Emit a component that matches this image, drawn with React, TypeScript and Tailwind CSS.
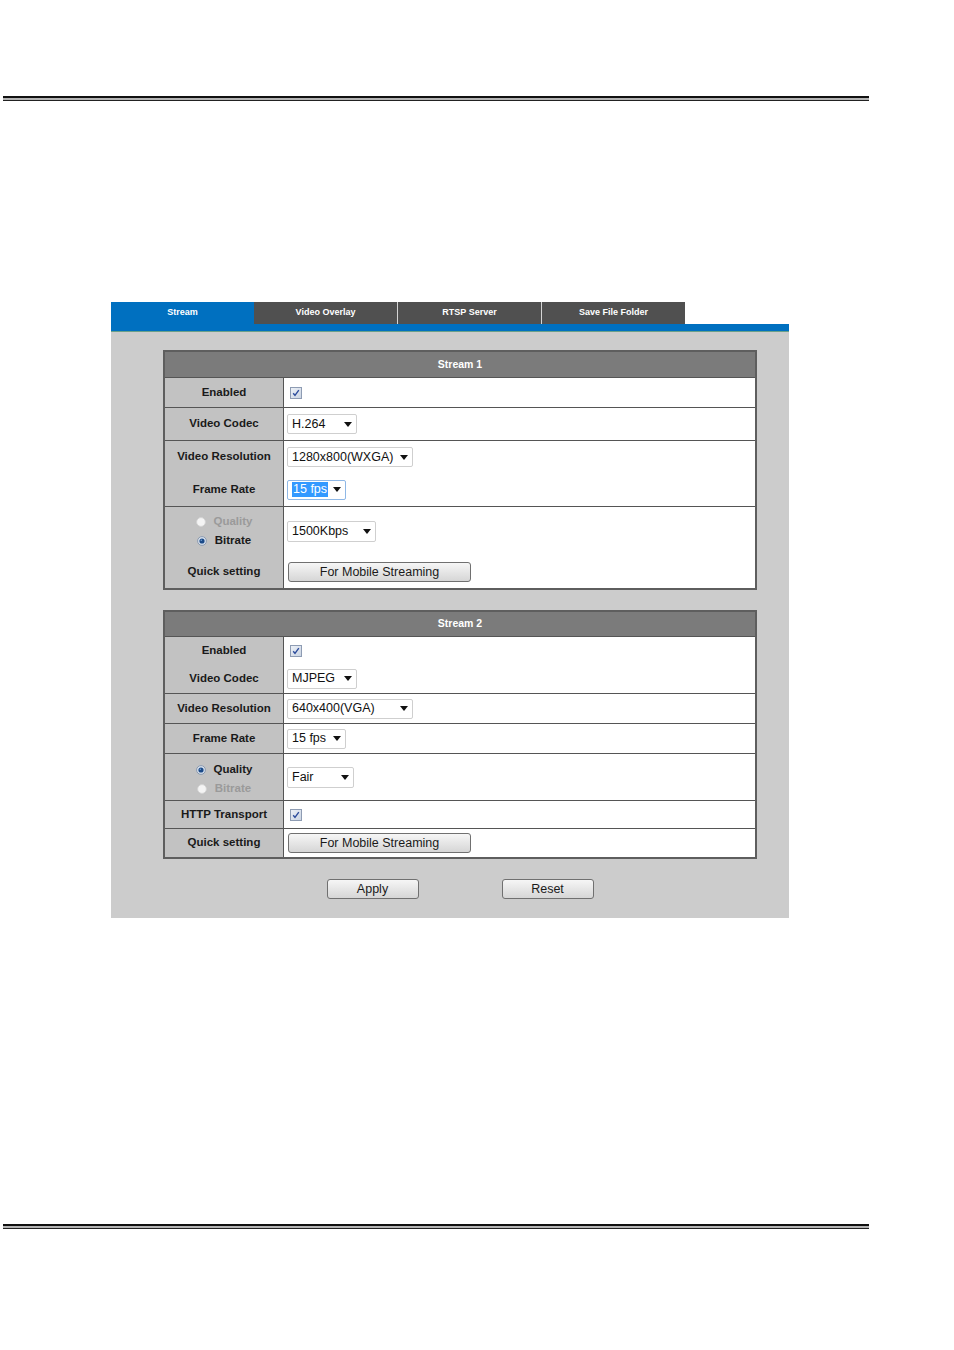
import React from 'react';

const Rule: React.FC = () => (
  <div className="ml-[3px] w-[866px]">
    <div className="h-[2px] bg-[#111]" />
    <div className="h-[2px] bg-[#b4b4b4]" />
    <div className="h-[1px] bg-[#222]" />
  </div>
);

const Arrow = () => (
  <span className="w-0 h-0 border-l-[4px] border-r-[4px] border-t-[5px] border-l-transparent border-r-transparent border-t-[#111]" />
);

const Select: React.FC<{ w: string; h?: string; focus?: boolean; children: React.ReactNode }> = ({ w, h = 'h-[20px]', focus, children }) => (
  <div
    className={`${w} ${h} flex items-center justify-between pl-[4px] pr-[4px] bg-white rounded-[2px] border text-[12.5px] text-[#111] leading-none ${
      focus ? 'border-[#8fb8e6]' : 'border-[#cfcfcf]'
    }`}
  >
    {focus ? <span className="bg-[#3399ff] text-white px-[1px] py-[1px]">{children}</span> : <span>{children}</span>}
    <Arrow />
  </div>
);

const Check = () => (
  <svg width="12" height="12" viewBox="0 0 12 12">
    <defs>
      <linearGradient id="cb" x1="0" y1="0" x2="1" y2="1">
        <stop offset="0" stopColor="#eef2f8" />
        <stop offset="1" stopColor="#c9d3e2" />
      </linearGradient>
    </defs>
    <rect x="0.5" y="0.5" width="11" height="11" fill="url(#cb)" stroke="#8e9cb3" />
    <path d="M3.2 6.2 L5 8.4 L8.8 3.2" fill="none" stroke="#2c4c9c" strokeWidth="1.4" />
  </svg>
);

const Radio: React.FC<{ on?: boolean }> = ({ on }) => (
  <svg width="10" height="10" viewBox="0 0 10 10">
    {on ? (
      <>
        <circle cx="5" cy="5" r="4.4" fill="#d7e0ec" stroke="#8595ab" strokeWidth="0.9" />
        <circle cx="5" cy="5" r="2.6" fill="#1b4a88" />
        <circle cx="4.3" cy="4.2" r="0.8" fill="#6f9fd6" />
      </>
    ) : (
      <circle cx="5" cy="5" r="4.4" fill="#f4f4f4" stroke="#d2d2d2" strokeWidth="0.9" />
    )}
  </svg>
);

const Btn: React.FC<{ w: string; children: React.ReactNode }> = ({ w, children }) => (
  <div className={`${w} h-[20px] flex items-center justify-center rounded-[3px] border border-[#707070] bg-gradient-to-b from-[#f6f6f6] to-[#d6d6d6] text-[12.5px] text-[#1a1a1a] leading-none`}>
    {children}
  </div>
);

const Label: React.FC<{ h: string; dim?: boolean; children: React.ReactNode }> = ({ h, dim, children }) => (
  <div className={`${h} flex items-center justify-center text-[11.5px] font-bold ${dim ? 'text-[#9a9a9a]' : 'text-[#1a1a1a]'}`}>
    {children}
  </div>
);

const Val: React.FC<{ h: string; children?: React.ReactNode }> = ({ h, children }) => (
  <div className={`${h} flex items-center pl-[3px]`}>{children}</div>
);

const Row: React.FC<{ h: string; left: React.ReactNode; right: React.ReactNode }> = ({ h, left, right }) => (
  <div className={`${h} flex border-t border-[#555]`}>
    <div className="w-[119px] bg-[#c2c2c2] border-r border-[#555] flex flex-col justify-center">{left}</div>
    <div className="flex-1 bg-white flex flex-col justify-center">{right}</div>
  </div>
);

const RadioLine: React.FC<{ on?: boolean; children: React.ReactNode }> = ({ on, children }) => (
  <div className="h-[19px] flex items-center justify-center gap-[8px] text-[11.5px] font-bold">
    <Radio on={on} />
    <span className={on ? 'text-[#1a1a1a]' : 'text-[#9a9a9a]'}>{children}</span>
  </div>
);

const Header: React.FC<{ h: string; title: string }> = ({ h, title }) => (
  <div className={`${h} bg-[#7b7b7b] flex items-center justify-center text-white text-[10.5px] font-bold`}>{title}</div>
);

const App: React.FC = () => {
  const tabs = ['Video Overlay', 'RTSP Server', 'Save File Folder'];

  return (
    <div className="w-[954px] h-[1350px] bg-white overflow-hidden font-['Liberation_Sans',Arial,sans-serif]">
      <div className="pt-[96px]">
        <Rule />
      </div>

      <div className="mt-[201px] ml-[111px] w-[678px] bg-[#cccccc]">
        {/* tabs */}
        <div className="flex bg-white h-[22px]">
          <div className="w-[143px] bg-[#0070c0] flex items-center justify-center text-white text-[9px] font-bold">Stream</div>
          {tabs.map((t, i) => (
            <React.Fragment key={t}>
              {i > 0 && <div className="w-[1px] bg-[#d4d4d4]" />}
              <div className="w-[143px] bg-[#505050] flex items-center justify-center text-white text-[9px] font-bold">{t}</div>
            </React.Fragment>
          ))}
        </div>
        <div className="h-[7px] bg-[#0070c0]" />
        <div className="h-[1px] bg-[#6aa08a]" />

        <div className="pt-[18px] pl-[52px]">
          {/* Stream 1 */}
          <div className="w-[594px] border-2 border-[#5e5e5e]">
            <Header h="h-[25px]" title="Stream 1" />
            <Row h="h-[30px]" left={<Label h="h-[29px]">Enabled</Label>} right={<Val h="h-[29px]"><span className="pl-[3px] flex"><Check /></span></Val>} />
            <Row h="h-[33px]" left={<Label h="h-[32px]">Video Codec</Label>} right={<Val h="h-[32px]"><Select w="w-[70px]">H.264</Select></Val>} />
            <Row
              h="h-[66px]"
              left={
                <>
                  <Label h="h-[32px]">Video Resolution</Label>
                  <Label h="h-[33px]">Frame Rate</Label>
                </>
              }
              right={
                <>
                  <Val h="h-[32px]"><Select w="w-[126px]">1280x800(WXGA)</Select></Val>
                  <Val h="h-[33px]"><Select w="w-[59px]" focus>15 fps</Select></Val>
                </>
              }
            />
            <Row
              h="h-[82px]"
              left={
                <>
                  <div className="h-[49px] flex flex-col justify-center">
                    <RadioLine>Quality</RadioLine>
                    <RadioLine on>Bitrate</RadioLine>
                  </div>
                  <Label h="h-[32px]">Quick setting</Label>
                </>
              }
              right={
                <>
                  <Val h="h-[49px]"><Select w="w-[89px]" h="h-[21px]">1500Kbps</Select></Val>
                  <Val h="h-[32px]"><span className="pl-[1px] flex"><Btn w="w-[183px]">For Mobile Streaming</Btn></span></Val>
                </>
              }
            />
          </div>

          {/* Stream 2 */}
          <div className="mt-[20px] w-[594px] border-2 border-[#5e5e5e]">
            <Header h="h-[24px]" title="Stream 2" />
            <Row
              h="h-[57px]"
              left={
                <>
                  <Label h="h-[27px]">Enabled</Label>
                  <Label h="h-[29px]">Video Codec</Label>
                </>
              }
              right={
                <>
                  <Val h="h-[27px]"><span className="pl-[3px] flex"><Check /></span></Val>
                  <Val h="h-[29px]"><Select w="w-[70px]">MJPEG</Select></Val>
                </>
              }
            />
            <Row h="h-[30px]" left={<Label h="h-[29px]">Video Resolution</Label>} right={<Val h="h-[29px]"><Select w="w-[126px]">640x400(VGA)</Select></Val>} />
            <Row h="h-[30px]" left={<Label h="h-[29px]">Frame Rate</Label>} right={<Val h="h-[29px]"><Select w="w-[59px]">15 fps</Select></Val>} />
            <Row
              h="h-[47px]"
              left={
                <div className="pt-[4px]">
                  <RadioLine on>Quality</RadioLine>
                  <RadioLine>Bitrate</RadioLine>
                </div>
              }
              right={<Val h="h-[46px]"><Select w="w-[67px]" h="h-[21px]">Fair</Select></Val>}
            />
            <Row h="h-[28px]" left={<Label h="h-[27px]">HTTP Transport</Label>} right={<Val h="h-[27px]"><span className="pl-[3px] flex"><Check /></span></Val>} />
            <Row h="h-[29px]" left={<Label h="h-[28px]">Quick setting</Label>} right={<Val h="h-[28px]"><span className="pl-[1px] flex"><Btn w="w-[183px]">For Mobile Streaming</Btn></span></Val>} />
          </div>

          <div className="w-[594px] pt-[20px] pb-[19px] flex justify-center gap-[83px]">
            <Btn w="w-[92px]">Apply</Btn>
            <Btn w="w-[92px]">Reset</Btn>
          </div>
        </div>
      </div>

      <div className="mt-[306px]">
        <Rule />
      </div>
    </div>
  );
};

export default App;
